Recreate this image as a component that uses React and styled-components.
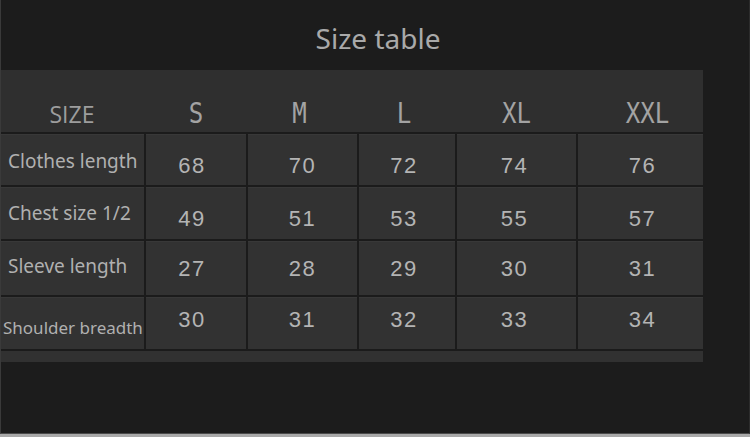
import React from 'react';
import styled, { createGlobalStyle } from 'styled-components';

const sizes = ['S', 'M', 'L', 'XL', 'XXL'];
const headNudge = [0, -3, -3, 0, 7];
const valueNudge = [-4, 0, -3, -2, 2];

const rows = [
	{ label: 'Clothes length', values: [68, 70, 72, 74, 76], shift: 6, labelShift: 1 },
	{ label: 'Chest size 1/2', values: [49, 51, 53, 55, 57], shift: 6, labelShift: 0 },
	{ label: 'Sleeve length', values: [27, 28, 29, 30, 31], shift: 1, labelShift: -2 },
	{ label: 'Shoulder breadth', values: [30, 31, 32, 33, 34], shift: -3, labelShift: 4, small: true },
];

const GlobalStyle = createGlobalStyle`
	html, body {
		margin: 0;
		padding: 0;
		background: #a9a9a9;
	}
`;

export default function App() {
	return (
		<>
			<GlobalStyle />
			<Page>
				<Title>Size table</Title>
				<Panel>
					<HeaderRow>
						<HeadLabel>SIZE</HeadLabel>
						{sizes.map((s, i) => (
							<HeadSize key={s} $nudge={headNudge[i]}>
								{s}
							</HeadSize>
						))}
					</HeaderRow>
					<Body>
						{rows.map((row) => (
							<React.Fragment key={row.label}>
								<LabelCell $small={row.small} $shift={row.labelShift}>
									{row.label}
								</LabelCell>
								{row.values.map((v, i) => (
									<ValueCell key={i} $shift={row.shift}>
										<Num $nudge={valueNudge[i]}>{v}</Num>
									</ValueCell>
								))}
							</React.Fragment>
						))}
					</Body>
					<Strip />
				</Panel>
			</Page>
		</>
	);
}

const columns = '144px 100px 109px 96px 119px 125px';

const Page = styled.div`
	box-sizing: border-box;
	width: 750px;
	height: 434px;
	background: #1c1c1c;
	border-left: 1px solid #3a3a3a;
	border-right: 1px solid #2c2c2c;
	border-bottom: 1px solid #4a4a4a;
	overflow: hidden;
`;

const Title = styled.h1`
	margin: 0;
	height: 70px;
	padding: 17px 0 0 6px;
	box-sizing: border-box;
	text-align: center;
	font-family: 'Noto Sans', 'Open Sans', sans-serif;
	font-weight: 400;
	font-size: 28px;
	line-height: 42px;
	color: #a9a9a9;
`;

const Panel = styled.div`
	width: 703px;
	margin-left: -1px;
	background: #2f2f2f;
`;

const HeaderRow = styled.div`
	display: grid;
	grid-template-columns: ${columns};
	column-gap: 2px;
	height: 64px;
	align-items: end;
	padding-bottom: 1px;
	box-sizing: border-box;
	border-bottom: 2px solid #1b1b1b;
	background: #2f2f2f;
`;

const HeadLabel = styled.div`
	text-align: center;
	font-family: 'Open Sans', 'Noto Sans', sans-serif;
	font-size: 23px;
	line-height: 34px;
	color: #9d9d9d;
`;

const HeadSize = styled.div`
	text-align: center;
	font-family: 'DejaVu Sans Mono', monospace;
	font-size: 28px;
	line-height: 34px;
	color: #a3a3a3;
	transform: translateX(${(p) => p.$nudge}px) scaleX(0.86);
`;

const Body = styled.div`
	display: grid;
	grid-template-columns: ${columns};
	grid-template-rows: 51px 52px 54px 52px;
	gap: 2px;
	background: #1b1b1b;
	padding-bottom: 2px;
`;

const Cell = styled.div`
	background: #323232;
	display: flex;
	align-items: center;
	box-sizing: border-box;
	box-shadow: inset 0 1px 0 #383838;
	padding-top: ${(p) => Math.max(0, p.$shift * 2)}px;
	padding-bottom: ${(p) => Math.max(0, -p.$shift * 2)}px;
`;

const LabelCell = styled(Cell)`
	padding-left: ${(p) => (p.$small ? '3px' : '8px')};
	font-family: 'Noto Sans', 'Open Sans', sans-serif;
	font-size: ${(p) => (p.$small ? '17px' : '19px')};
	color: #b0b0b0;
	white-space: nowrap;
`;

const ValueCell = styled(Cell)`
	justify-content: center;
	font-family: 'Liberation Sans', Arial, sans-serif;
	font-size: 22px;
	letter-spacing: 1.5px;
	color: #b4b4b4;
`;

const Num = styled.span`
	transform: translateX(${(p) => p.$nudge}px);
`;

const Strip = styled.div`
	height: 11px;
	background: #313131;
`;
